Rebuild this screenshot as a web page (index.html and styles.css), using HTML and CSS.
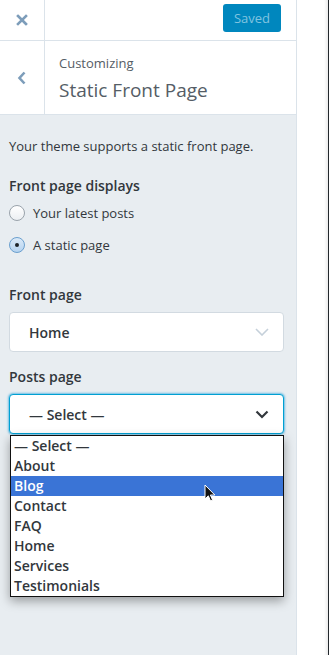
FILE: index.html
```html
<!DOCTYPE html>
<html lang="en">
<head>
    <meta charset="UTF-8">
    <meta name="viewport" content="width=device-width, initial-scale=1.0">
    <title>Customizing Static Front Page</title>
    <link rel="stylesheet" href="styles.css">
</head>
<body>
    <div class="app">
        <div class="sidebar">
            <div class="topbar">
                <div class="icon-cell">
                    <svg width="12" height="12" viewBox="0 0 12 12"><path d="M2 2 L10 10 M10 2 L2 10" stroke="#7d9dba" stroke-width="2.6" stroke-linecap="square"/></svg>
                </div>
                <div class="save-wrap">
                    <button class="saved-btn">Saved</button>
                </div>
            </div>

            <div class="section-head">
                <div class="icon-cell">
                    <svg width="10" height="14" viewBox="0 0 10 14"><path d="M7.5 1.5 L2.5 7 L7.5 12.5" fill="none" stroke="#7d9dba" stroke-width="2.6"/></svg>
                </div>
                <div class="title-block">
                    <div class="crumb">Customizing</div>
                    <div class="title">Static Front Page</div>
                </div>
            </div>

            <div class="content">
                <p class="desc">Your theme supports a static front page.</p>

                <div class="field-title">Front page displays</div>
                <label class="radio-row"><span class="radio"></span>Your latest posts</label>
                <label class="radio-row"><span class="radio checked"></span>A static page</label>

                <div class="field-title page-label first">Front page</div>
                <div class="select">
                    <span>Home</span>
                    <svg width="14" height="8" viewBox="0 0 14 8"><path d="M1 1 L7 7 L13 1" fill="none" stroke="#c5d0da" stroke-width="1.6"/></svg>
                </div>

                <div class="field-title page-label">Posts page</div>
                <div class="select-wrap">
                    <div class="select focused">
                        <span>&mdash; Select &mdash;</span>
                        <svg width="14" height="9" viewBox="0 0 14 9"><path d="M1.5 1.5 L7 7 L12.5 1.5" fill="none" stroke="#32373c" stroke-width="2.2"/></svg>
                    </div>
                    <ul class="dropdown">
                        <li>&mdash; Select &mdash;</li>
                        <li>About</li>
                        <li class="active">Blog</li>
                        <li>Contact</li>
                        <li>FAQ</li>
                        <li>Home</li>
                        <li>Services</li>
                        <li>Testimonials</li>
                    </ul>
                    <svg class="cursor" width="12" height="19" viewBox="0 0 12 19"><path d="M1 1 L1 15 L4.3 11.8 L6.6 17 L8.6 16.1 L6.4 11 L10.8 11 Z" fill="#111" stroke="#fff" stroke-width="1"/></svg>
                </div>
            </div>
        </div>
        <div class="preview"></div>
    </div>
</body>
</html>
```

FILE: styles.css
```css
body {
    margin: 0;
    font-family: "Open Sans", "Noto Sans", sans-serif;
    color: #32373c;
}
.app {
    display: flex;
    width: 329px;
    height: 655px;
    overflow: hidden;
}
.sidebar {
    width: 296px;
    flex-shrink: 0;
    background: #e8edf1;
    border-right: 1px solid #dbe3ea;
}
.topbar {
    display: flex;
    height: 40px;
    background: #fff;
    border-bottom: 1px solid #dbe3ea;
}
.icon-cell {
    width: 44px;
    display: flex;
    align-items: center;
    justify-content: center;
    border-right: 1px solid #dbe3ea;
}
.save-wrap {
    flex: 1;
    display: flex;
    justify-content: flex-end;
    align-items: flex-start;
    padding: 4px 15px 0 0;
}
.saved-btn {
    width: 58px;
    height: 28px;
    border: none;
    border-radius: 3px;
    background: #0087be;
    color: #80c4e0;
    font-family: inherit;
    font-size: 13px;
    padding: 0;
}
.section-head {
    display: flex;
    height: 73px;
    background: #fff;
    border-bottom: 1px solid #dbe3ea;
}
.title-block {
    padding: 12px 0 0 14px;
    color: #555d66;
}
.crumb {
    font-size: 13px;
    line-height: 20px;
}
.title {
    font-size: 19px;
    line-height: 28px;
    margin-top: 3px;
}
.content {
    padding: 21px 12px 0 9px;
}
.desc {
    margin: 0 0 20px;
    font-size: 13px;
    line-height: 20px;
}
.field-title {
    font-size: 14px;
    font-weight: 600;
    line-height: 20px;
    margin-bottom: 8px;
}
.radio-row {
    display: flex;
    align-items: center;
    gap: 8px;
    height: 18px;
    margin-bottom: 14px;
    font-size: 13px;
}
.radio {
    width: 14px;
    height: 14px;
    border-radius: 50%;
    border: 1px solid #9aa3ab;
    background: linear-gradient(#fff, #eceff2);
    display: flex;
    align-items: center;
    justify-content: center;
}
.radio.checked {
    border-color: #6a9fce;
    background: linear-gradient(#dbeaf8, #b5d3f0);
}
.radio.checked::after {
    content: "";
    width: 4px;
    height: 4px;
    border-radius: 50%;
    background: #1d2327;
}
.page-label {
    margin-top: 15px;
    margin-bottom: 7px;
}
.page-label.first {
    margin-top: 31px;
}
.select {
    height: 38px;
    display: flex;
    align-items: center;
    justify-content: space-between;
    padding: 0 14px 0 19px;
    background: #fff;
    border: 1px solid #d2dae1;
    border-radius: 4px;
    font-size: 14px;
    font-weight: 600;
}
.select.focused {
    border-color: #00a0d2;
    box-shadow: 0 0 2px 1px rgba(30, 160, 220, 0.6);
}
.select-wrap {
    position: relative;
}
.dropdown {
    position: absolute;
    top: 41px;
    left: 1px;
    width: 272px;
    margin: 0;
    padding: 0;
    list-style: none;
    background: #fff;
    border: 1px solid #111;
    box-shadow: 0 4px 10px rgba(0, 0, 0, 0.35);
}
.dropdown li {
    height: 20px;
    line-height: 20px;
    padding-left: 3px;
    font-size: 14px;
    font-weight: 600;
}
.dropdown li.active {
    background: #3a74d6;
    color: #fff;
}
.cursor {
    position: absolute;
    left: 195px;
    top: 90px;
}
.preview {
    flex: 1;
    background: #fff;
    border-right: 1px solid #23282d;
    box-shadow: inset -4px 0 3px -2px rgba(0, 0, 0, 0.08);
}
```
